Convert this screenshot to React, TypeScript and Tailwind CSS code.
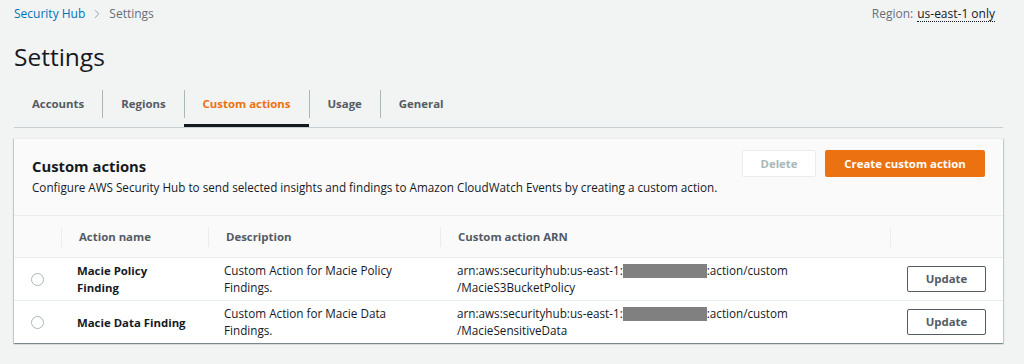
import { ChevronRight } from 'lucide-react';

const tabs = ['Accounts', 'Regions', 'Custom actions', 'Usage', 'General'];

const rows = [
  {
    name: ['Macie Policy', 'Finding'],
    desc: 'Custom Action for Macie Policy Findings.',
    arn: '/MacieS3BucketPolicy',
  },
  {
    name: ['Macie Data Finding'],
    desc: 'Custom Action for Macie Data Findings.',
    arn: '/MacieSensitiveData',
  },
];

/* ── Page ─────────────────────────────────────────── */
export default function App() {
  return (
    <div className="min-h-screen bg-[#f2f3f3] pl-[14px] pr-[21px] font-['Open_Sans',sans-serif] text-[#16191f]">
      {/* Breadcrumb + region */}
      <div className="flex h-[27px] items-center justify-between pr-[8px] text-[12px]">
        <div className="flex items-center">
          <span className="text-[#0073bb]">Security Hub</span>
          <ChevronRight className="mx-[5px] size-[14px] text-[#879596]" strokeWidth={1.5} />
          <span className="text-[#687078]">Settings</span>
        </div>
        <div className="flex items-center gap-1">
          <span className="text-[#687078]">Region:</span>
          <span className="border-b border-dotted border-[#16191f] leading-[15px]">us-east-1 only</span>
        </div>
      </div>

      {/* Title */}
      <h1 className="mt-[12px] text-[24.5px] leading-[36px]">Settings</h1>

      {/* Tabs */}
      <div className="mt-[5px] flex border-b border-[#c6ced0]">
        {tabs.map((t, i) => (
          <div
            key={t}
            className={[
              'flex h-[47px] items-center',
              t === 'Custom actions' ? 'border-b-[3px] border-[#16191f] -mb-px pt-[3px]' : '',
            ].join(' ')}
          >
            {i > 0 && <div className="h-[28px] w-px bg-[#aab7b8]" />}
            <span
              className={[
                'px-[18px] text-[11.4px] font-bold',
                t === 'Custom actions' ? 'text-[#ec7211]' : 'text-[#545b64]',
              ].join(' ')}
            >
              {t}
            </span>
          </div>
        ))}
      </div>

      {/* Card */}
      <div className="mt-[10px] border-t border-[#eaeded] bg-white shadow-[0_1px_1px_rgba(0,28,36,0.3),1px_1px_1px_rgba(0,28,36,0.15),-1px_1px_1px_rgba(0,28,36,0.15)]">
        <div className="flex items-start justify-between bg-[#fafafa] px-[18px] pt-[11px] pb-[18px]">
          <div className="pt-[5px]">
            <h2 className="text-[14.8px] font-bold leading-[22px]">Custom actions</h2>
            <p className="text-[11.7px] leading-[20px]">
              Configure AWS Security Hub to send selected insights and findings to Amazon CloudWatch Events by creating a custom action.
            </p>
          </div>
          <div className="flex gap-[9px]">
            <button className="h-[27px] w-[74px] rounded-[2px] border border-[#eaeded] bg-white text-[11.4px] font-bold text-[#aab7b8]">
              Delete
            </button>
            <button className="h-[27px] w-[160px] rounded-[2px] bg-[#ec7211] text-[11.4px] font-bold text-white">
              Create custom action
            </button>
          </div>
        </div>

        {/* Table */}
        <div className="grid grid-cols-[47px_147px_232px_450px_1fr] text-[11.7px]">
          <div className="h-[42px] border-t border-[#eaeded] bg-[#fafafa]" />
          {['Action name', 'Description', 'Custom action ARN', ''].map((h) => (
            <div key={h} className="flex h-[42px] items-center border-t border-[#eaeded] bg-[#fafafa]">
              <div className="flex h-[20px] items-center border-l border-[#eaeded] pl-[17px] text-[11.4px] font-bold text-[#545b64]">
                {h}
              </div>
            </div>
          ))}

          {rows.map((r) => (
            <div key={r.arn} className="contents">
              <div className="flex h-[43px] items-center justify-center border-t border-[#eaeded]">
                <span className="size-[13px] rounded-full border border-[#aab7b8]" />
              </div>
              <div className="flex items-center border-t border-[#eaeded] pl-[16px] text-[11.4px] leading-[17px] font-bold">
                <div>
                  {r.name.map((n) => (
                    <div key={n}>{n}</div>
                  ))}
                </div>
              </div>
              <div className="flex items-center border-t border-[#eaeded] pl-[16px] pr-[40px] leading-[17px]">
                {r.desc}
              </div>
              <div className="flex items-center border-t border-[#eaeded] pl-[17px] leading-[17px]">
                <div>
                  <div className="flex items-center">
                    arn:aws:securityhub:us-east-1:
                    <span className="h-[14px] w-[84px] bg-[#808080]" />
                    :action/custom
                  </div>
                  <div>{r.arn}</div>
                </div>
              </div>
              <div className="flex items-center justify-end border-t border-[#eaeded] pr-[17px]">
                <button className="h-[26px] w-[79px] rounded-[2px] border border-[#545b64] text-[11.4px] font-bold text-[#545b64]">
                  Update
                </button>
              </div>
            </div>
          ))}
        </div>
      </div>
    </div>
  );
}
